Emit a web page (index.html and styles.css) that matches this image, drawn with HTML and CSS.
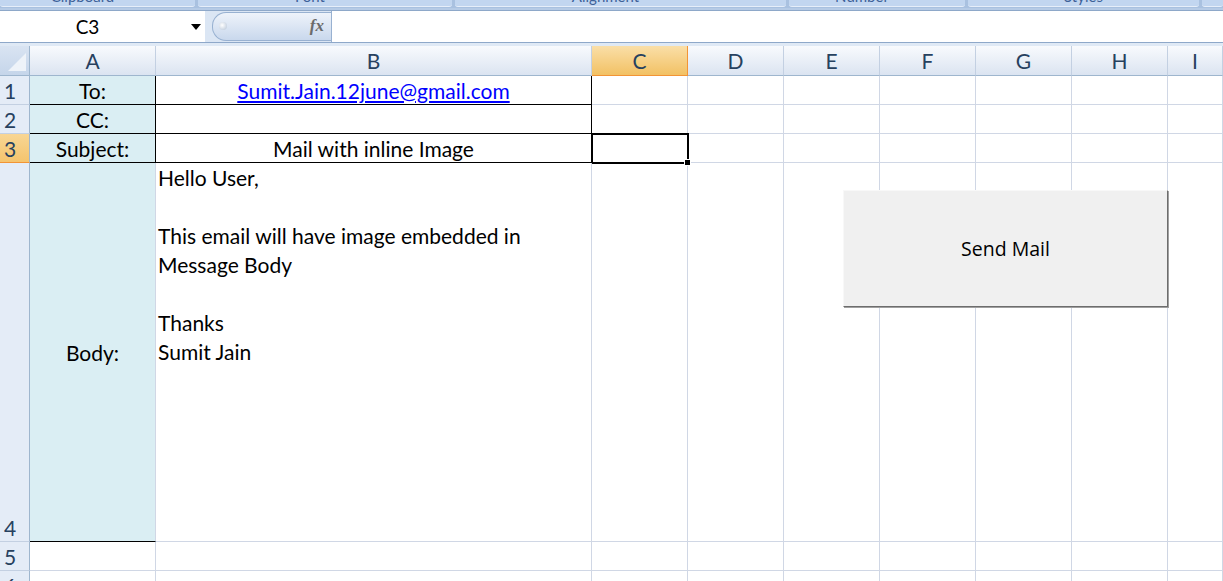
FILE: index.html
```html
<html>
<head>
<meta charset="utf-8"/>
<title>Send Mail - Sheet1</title>
<link rel="stylesheet" href="styles.css">
</head>
<body>

<!-- bottom edge of the ribbon, group captions cut off -->
<div class="ribbon">
	<div class="group launch g-clip"><span>Clipboard</span></div>
	<div class="group launch g-font"><span>Font</span></div>
	<div class="group launch g-align"><span>Alignment</span></div>
	<div class="group launch g-num"><span>Number</span></div>
	<div class="group g-styles"><span>Styles</span></div>
	<div class="group g-rest"></div>
</div>

<!-- name box + formula bar -->
<div class="fbar">
	<div class="namebox"><span class="ref">C3</span><span class="drop"></span></div>
	<div class="fxpill"><span class="knob"></span><span class="fx">fx</span></div>
	<div class="formula"></div>
</div>
<div class="fgap"></div>

<div class="sheet">
	<div class="grid">
		<!-- header row -->
		<div class="corner"></div>
		<div class="ch">A</div>
		<div class="ch">B</div>
		<div class="ch sel">C</div>
		<div class="ch">D</div>
		<div class="ch">E</div>
		<div class="ch">F</div>
		<div class="ch">G</div>
		<div class="ch">H</div>
		<div class="ch">I</div>

		<!-- row 1 -->
		<div class="rh">1</div>
		<div class="c lbl bb br">To:</div>
		<div class="c mid bb br"><a href="#">Sumit.Jain.12june@gmail.com</a></div>
		<div class="c"></div><div class="c"></div><div class="c"></div><div class="c"></div><div class="c"></div><div class="c"></div><div class="c"></div>

		<!-- row 2 -->
		<div class="rh">2</div>
		<div class="c lbl bb br">CC:</div>
		<div class="c mid bb br"></div>
		<div class="c"></div><div class="c"></div><div class="c"></div><div class="c"></div><div class="c"></div><div class="c"></div><div class="c"></div>

		<!-- row 3 -->
		<div class="rh sel">3</div>
		<div class="c lbl bb br">Subject:</div>
		<div class="c mid bb br">Mail with inline Image</div>
		<div class="c active"><span class="handle"></span></div>
		<div class="c"></div><div class="c"></div><div class="c"></div><div class="c"></div><div class="c"></div><div class="c"></div>

		<!-- row 4 -->
		<div class="rh">4</div>
		<div class="c lbl bb">Body:</div>
		<div class="c body">Hello User,<br><br>This email will have image embedded in<br>Message Body<br><br>Thanks<br>Sumit Jain</div>
		<div class="c"></div><div class="c"></div><div class="c"></div><div class="c"></div><div class="c"></div><div class="c"></div><div class="c"></div>

		<!-- row 5 -->
		<div class="rh">5</div>
		<div class="c"></div><div class="c"></div><div class="c"></div><div class="c"></div><div class="c"></div><div class="c"></div><div class="c"></div><div class="c"></div><div class="c"></div>

		<!-- row 6 -->
		<div class="rh">6</div>
		<div class="c"></div><div class="c"></div><div class="c"></div><div class="c"></div><div class="c"></div><div class="c"></div><div class="c"></div><div class="c"></div><div class="c"></div>
	</div>

	<button class="sendbtn" type="button">Send Mail</button>
</div>

</body>
</html>
```

FILE: styles.css
```css
html, body { margin: 0; padding: 0; }
body { font-family: Lato, "Noto Sans", sans-serif; width: 1223px; height: 581px; overflow: hidden; background: #fff; }

/* ribbon strip */
.ribbon { display: flex; height: 8px; background: #a9c1e0; border-bottom: 2px solid #b6cbe6; overflow: hidden; }
.group { box-sizing: border-box; height: 7px; margin-right: 3px; background: #c2d6f0; border-bottom: 1px solid #e6eef9;
	border-radius: 0 0 3px 3px; overflow: hidden; text-align: center; position: relative; }
.group.launch { padding-right: 30px; }
.group span { position: relative; top: -11px; font-size: 15px; color: #3d6199; line-height: 15px; white-space: nowrap; }
.g-clip { width: 195px; }
.g-font { width: 254px; }
.g-align { width: 331px; }
.g-num { width: 176px; }
.g-styles { width: 231px; }
.g-rest { flex: 1; margin-right: 0; }

/* formula bar */
.fbar { display: flex; height: 31px; background: #dbe6f4; border-top: 1px solid #8ea8c9; border-bottom: 1px solid #8ea8c9; }
.namebox { width: 205px; background: #fff; display: flex; align-items: center; position: relative; }
.namebox .ref { width: 175px; text-align: center; font-size: 19px; color: #000; }
.namebox .drop { position: absolute; left: 191px; top: 13px; width: 0; height: 0;
	border-left: 5px solid transparent; border-right: 5px solid transparent; border-top: 6px solid #000; }
.fxpill { width: 118px; margin: 1px 0 1px 7px; border-radius: 14px 0 0 14px; border: 1px solid #98b1d1; border-right: none;
	background: linear-gradient(#eef3fa, #c9d8ed); position: relative; }
.fxpill .knob { position: absolute; left: 6px; top: 9px; width: 8px; height: 8px; border-radius: 50%;
	background: radial-gradient(circle at 40% 40%, #fff, #b4c3d6); }
.fxpill .fx { position: absolute; right: 7px; top: 3px; font-family: "Liberation Serif", serif; font-style: italic; font-weight: bold;
	font-size: 17px; color: #6b6b6b; }
.formula { flex: 1; background: #fff; border-left: 1px solid #98b1d1; }
.fgap { height: 3px; background: #dfe9f5; }

/* sheet grid */
.sheet { position: relative; }
.grid { display: grid; grid-template-columns: 30px 126px 436px repeat(6, 96px) 55px;
	grid-template-rows: 30px 29px 29px 29px 379px 29px 29px; font-size: 21px; }
.grid > div { box-sizing: border-box; }

.corner { background: linear-gradient(#d9e4f2, #c5d5ea); border-right: 1px solid #9eb6ce; border-bottom: 1px solid #9eb6ce; position: relative; }
.corner::after { content: ""; position: absolute; right: 3px; bottom: 4px; width: 0; height: 0;
	border-left: 18px solid transparent; border-bottom: 18px solid #eef3f9; }

.ch { background: linear-gradient(#f8fafd, #dbe4f1); border-right: 1px solid #c3d0e2; border-bottom: 1px solid #9eb6ce;
	display: flex; align-items: center; justify-content: center; color: #27415f; }
.ch.sel { background: linear-gradient(#fadfa8, #f2c164); border-right-color: #f29436; border-bottom-color: #f29436; }

.rh { background: #e4ecf7; border-right: 1px solid #9eb6ce; border-bottom: 1px solid #c3d0e2;
	display: flex; align-items: flex-end; padding: 0 0 1px 4px; color: #27415f; line-height: 25px; }
.rh.sel { background: linear-gradient(#f8d694, #f5c46d); border-bottom-color: #f29436; }

.c { border-right: 1px solid #d0d7e5; border-bottom: 1px solid #d0d7e5; position: relative; color: #000; }
.c.bb { border-bottom-color: #000; }
.c.br { border-right-color: #000; }
.lbl { background: #daeef3; display: flex; align-items: center; justify-content: center; }
.mid { display: flex; align-items: center; justify-content: center; }
.mid a { color: #0000ff; text-decoration: underline; }
.body { padding: 0 0 0 2px; line-height: 29px; }

.active::after { content: ""; position: absolute; left: -1px; top: -1px; right: -2px; bottom: -2px; border: 2px solid #000; }
.handle { position: absolute; right: -4px; bottom: -4px; width: 5px; height: 5px; background: #000; border: 1px solid #fff; z-index: 2; }

/* floating form button */
.sendbtn { position: absolute; left: 843px; top: 144px; width: 325px; height: 117px; margin: 0;
	background: #f0f0f0; border: none; border-top: 1px solid #f8f8f8; border-left: 1px solid #f8f8f8;
	border-right: 1px solid #6d6d6d; border-bottom: 1px solid #6d6d6d; box-shadow: 1px 1px 0 #a0a0a0;
	font-family: "Open Sans", "Noto Sans", sans-serif; font-size: 19.5px; color: #000; padding: 0; }
```
